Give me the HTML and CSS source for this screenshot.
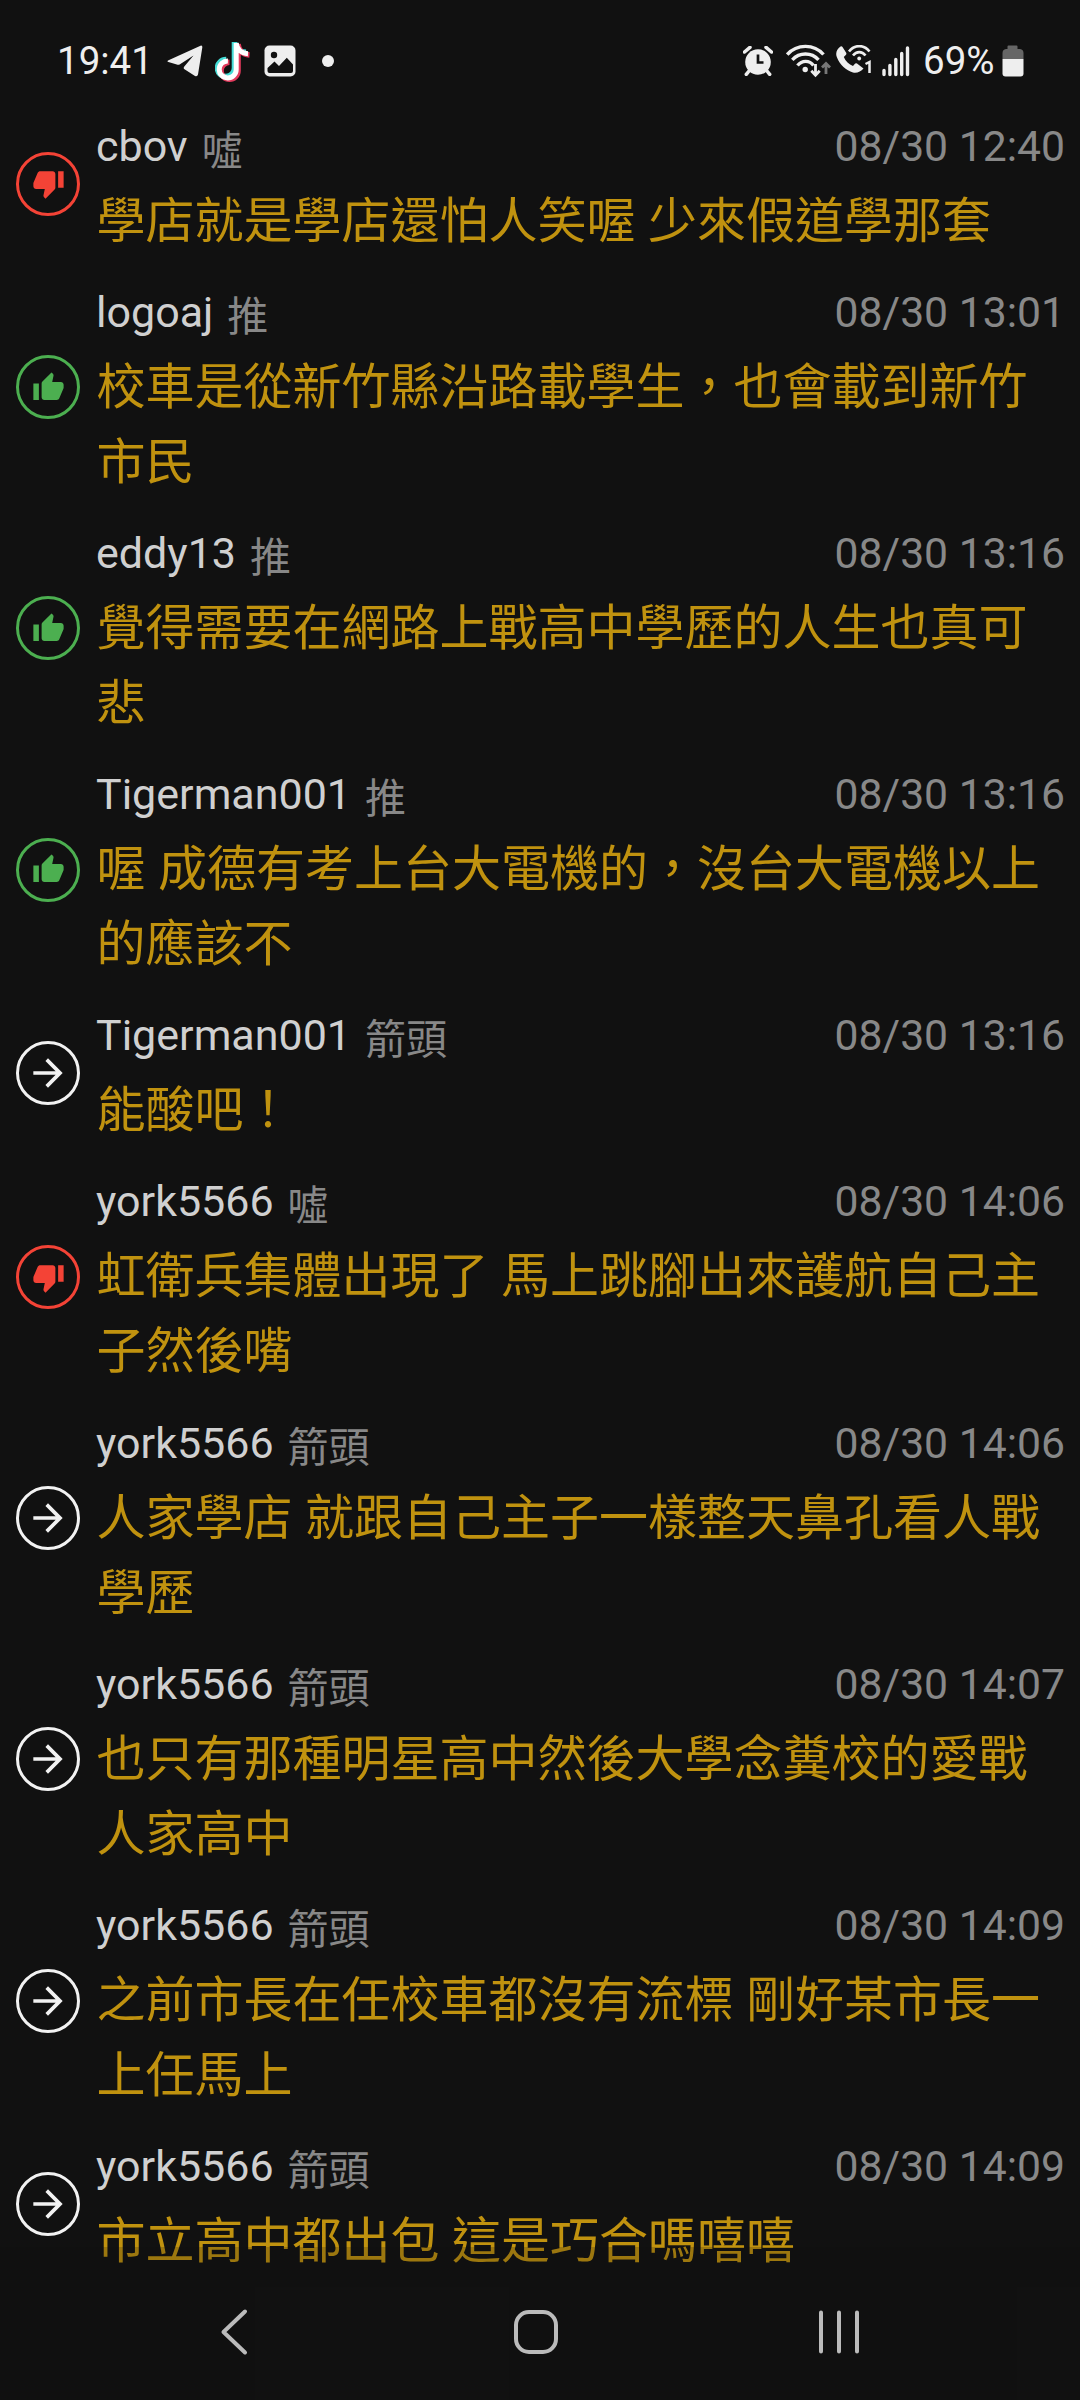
FILE: index.html
```html
<!DOCTYPE html>
<html lang="zh-Hant">
<head>
<meta charset="utf-8">
<title>推文</title>
<link rel="stylesheet" href="styles.css">
</head>
<body>
<svg width="0" height="0" class="defs">
  <symbol id="up" viewBox="0 0 24 24"><path d="M1 21h4V9H1v12zm22-11c0-1.100-.9-2-2-2h-6.310l.95-4.570.030-.320c0-.410-.170-.790-.440-1.060L14.170 1 7.590 7.590C7.220 7.950 7 8.450 7 9v10c0 1.100.9 2 2 2h9c.83 0 1.540-.5 1.840-1.220l3.020-7.050c.090-.230.140-.470.140-.730v-2z"/></symbol>
  <symbol id="down" viewBox="0 0 24 24"><path d="M15 3H6c-.83 0-1.540.5-1.840 1.220l-3.020 7.050c-.09.230-.14.470-.14.730v2c0 1.100.9 2 2 2h6.310l-.95 4.570-.030.320c0 .410.170.790.440 1.060L9.830 23l6.590-6.590c.360-.360.580-.860.580-1.410V5c0-1.100-.9-2-2-2zm4 0v12h4V3h-4z"/></symbol>
  <symbol id="arrow" viewBox="0 0 24 24"><path d="M12 4l-1.410 1.410L16.170 11H4v2h12.170l-5.580 5.590L12 20l8-8z"/></symbol>
</svg>
<div class="screen">
  <header class="status">
    <div class="status-left">
      <span class="clock">19:41</span>
      <svg class="telegram" width="36" height="32" viewBox="0 0 36 32"><path d="M1.500 15.200L33.500.7Q35.500 0 35.300 2.500L31 29.500Q30.400 32 28 31L17.500 24.300Q16 23.200 17.300 21.600L26.500 10.500L13 19.300Q11.500 20.200 9.800 19.600L1.400 17Q-.5 16.200 1.500 15.200Z"/></svg>
      <svg class="tiktok" width="36" height="41" viewBox="0 0 36 41">
        <g fill="none" stroke-width="5.600">
          <path stroke="#45dcd6" d="M19.500 1V27A8.500 8.500 0 1 1 11.200 18.600M19.500 1.500C20.200 7 24.200 11 31 11.300"/>
          <path stroke="#e23a5c" d="M23 3V29.700A8.500 8.500 0 1 1 14.500 21.200M23 3C23.500 9 27.500 13.500 34.500 14"/>
          <path stroke="#fff" stroke-width="5" d="M21.200 2V28.400A8.500 8.500 0 1 1 12.900 19.900M21.200 2C21.900 8 25.900 12.300 33 12.700"/>
        </g>
      </svg>
      <svg class="picture" width="32" height="32" viewBox="0 0 32 32"><rect x=".5" y=".5" width="31" height="31" rx="5"/><g fill="#111"><circle cx="10" cy="10" r="3.200"/><path d="M3.500 23L10.500 16.500L15 21L22.800 12.800L29 19.500V26Q29 28 27 28H5.500Q3.500 28 3.500 26Z"/></g></svg>
      <i class="more"></i>
    </div>
    <div class="status-right">
      <svg class="alarm" width="30" height="30" viewBox="0 0 30 30"><circle cx="15" cy="16" r="12.800"/><path d="M1.500 6L7 1.300M28.500 6L23 1.300M6 25L3.300 28.300M24 25L26.700 28.300" stroke="#eee" stroke-width="3.500" stroke-linecap="round"/><path d="M15 8.500V16.500H20.500" fill="none" stroke="#111" stroke-width="2.700"/></svg>
      <svg class="wifi" width="46" height="34" viewBox="0 0 46 34"><g fill="none" stroke="#eee" stroke-width="3.400"><path d="M1.200 10.500C11-.3 28-.3 37.500 10.500M6.300 15.800C13.500 8 25.500 8 32.500 15.800M11.500 21.500C16 16 23.500 16 27.500 21.500"/><path stroke-width="2.800" d="M29.500 20V31M25.300 26.800L29.500 31.200L33.700 26.800"/><path stroke="#777" stroke-width="2.800" d="M40 30V20M36 23.500L40 19.500L44 23.500"/></g><circle cx="19.200" cy="25.500" r="2.700"/></svg>
      <svg class="call" width="36" height="32" viewBox="0 0 36 32"><path d="M4.500 1.500C1 4-1 8 1 12.500C4 20 10 25.500 17 27.500C21 28.400 25 26.500 27.500 23.500L21 18.500Q19.500 18 18.500 19.200L17 21C13 19.500 9.500 16 7.800 12L10 9.800Q10.800 8.700 10 7.500L6.500 2Q5.700.8 4.500 1.500Z"/><g fill="none" stroke="#eee" stroke-width="2.600"><path d="M13 6.500C18.500-.7 28-.7 33.500 6.500M17 10.500C20.500 6 26 6 29.500 10.500"/></g><circle cx="23.200" cy="13.500" r="1.900"/><path d="M30 19.500L34 17.600V28" fill="none" stroke="#111" stroke-width="7"/><path d="M29.500 19L33.500 17V28" fill="none" stroke="#eee" stroke-width="2.500"/></svg>
      <svg class="signal" width="28" height="31" viewBox="0 0 28 31"><path d="M2 24.500V28.500M7.900 19.500V28.500M13.800 13.500V28.500M19.700 7.500V28.500M25.500 2V28.500" stroke="#eee" stroke-width="3.400" stroke-linecap="round"/></svg>
      <span class="percent">69%</span>
      <svg class="battery" width="22" height="32" viewBox="0 0 22 32"><path fill="#666" d="M5.500 4V1.500Q5.500.5 6.500.5H14.500Q15.500.5 15.500 1.500V4H18Q21.500 4.500 21.500 8V14H.5V8Q.5 4.500 4 4Z"/><path d="M.5 14H21.500V28.500Q21.500 31.500 18.500 31.500H3.500Q.5 31.500.5 28.500Z"/></svg>
    </div>
  </header>
  <main class="list">
    <article class="row"><span class="badge boo"><svg><use href="#down"/></svg></span><div class="body"><div class="head"><span class="name">cbov</span><span class="kind">噓</span><time>08/30 12:40</time></div><p>學店就是學店還怕人笑喔 少來假道學那套</p></div></article>
    <article class="row"><span class="badge push"><svg><use href="#up"/></svg></span><div class="body"><div class="head"><span class="name">logoaj</span><span class="kind">推</span><time>08/30 13:01</time></div><p>校車是從新竹縣沿路載學生，也會載到新竹<br>市民</p></div></article>
    <article class="row"><span class="badge push"><svg><use href="#up"/></svg></span><div class="body"><div class="head"><span class="name">eddy13</span><span class="kind">推</span><time>08/30 13:16</time></div><p>覺得需要在網路上戰高中學歷的人生也真可<br>悲</p></div></article>
    <article class="row"><span class="badge push"><svg><use href="#up"/></svg></span><div class="body"><div class="head"><span class="name">Tigerman001</span><span class="kind">推</span><time>08/30 13:16</time></div><p>喔 成德有考上台大電機的，沒台大電機以上<br>的應該不</p></div></article>
    <article class="row"><span class="badge"><svg><use href="#arrow"/></svg></span><div class="body"><div class="head"><span class="name">Tigerman001</span><span class="kind">箭頭</span><time>08/30 13:16</time></div><p>能酸吧！</p></div></article>
    <article class="row"><span class="badge boo"><svg><use href="#down"/></svg></span><div class="body"><div class="head"><span class="name">york5566</span><span class="kind">噓</span><time>08/30 14:06</time></div><p>虹衛兵集體出現了 馬上跳腳出來護航自己主<br>子然後嘴</p></div></article>
    <article class="row"><span class="badge"><svg><use href="#arrow"/></svg></span><div class="body"><div class="head"><span class="name">york5566</span><span class="kind">箭頭</span><time>08/30 14:06</time></div><p>人家學店 就跟自己主子一樣整天鼻孔看人戰<br>學歷</p></div></article>
    <article class="row"><span class="badge"><svg><use href="#arrow"/></svg></span><div class="body"><div class="head"><span class="name">york5566</span><span class="kind">箭頭</span><time>08/30 14:07</time></div><p>也只有那種明星高中然後大學念糞校的愛戰<br>人家高中</p></div></article>
    <article class="row"><span class="badge"><svg><use href="#arrow"/></svg></span><div class="body"><div class="head"><span class="name">york5566</span><span class="kind">箭頭</span><time>08/30 14:09</time></div><p>之前市長在任校車都沒有流標 剛好某市長一<br>上任馬上</p></div></article>
    <article class="row"><span class="badge"><svg><use href="#arrow"/></svg></span><div class="body"><div class="head"><span class="name">york5566</span><span class="kind">箭頭</span><time>08/30 14:09</time></div><p>市立高中都出包 這是巧合嗎嘻嘻</p></div></article>
  </main>
  <div class="scrim"></div>
  <nav class="nav">
    <svg viewBox="0 0 60 60"><path d="M40 9.500L18.500 30L40 50.500"/></svg>
    <svg viewBox="0 0 60 60"><rect x="10" y="10" width="40" height="40" rx="13"/></svg>
    <svg viewBox="0 0 60 60"><path d="M14 10.500V49.500M32 10.500V49.500M50 10.500V49.500"/></svg>
  </nav>
</div>
</body>
</html>
```
FILE: styles.css
```css
* { box-sizing: border-box; }
body {
  margin: 0;
  background: #111;
  color: #d0d0d0;
  font-family: Roboto, "Noto Sans CJK TC", sans-serif;
}
.defs { display: block; position: absolute; }
.screen {
  position: relative;
  display: flex;
  flex-direction: column;
  width: 1080px;
  height: 2400px;
  overflow: hidden;
}
.status {
  display: flex;
  justify-content: space-between;
  height: 100.500px;
  padding: 36px 56px 0 57px;
  color: #eee;
  fill: #eee;
}
.status-left, .status-right { display: flex; align-items: center; height: 50px; }
.status svg { display: block; flex: none; }
.clock, .percent { font-size: 38.500px; line-height: 50px; white-space: nowrap; }
.clock { width: 110px; }
.tiktok { margin-left: 12px; }
.picture { margin-left: 13px; }
.more { width: 12px; height: 12px; margin-left: 26px; border-radius: 50%; background: #eee; }
.wifi { margin-left: 13px; }
.call { margin-left: 4px; }
.signal { margin-left: 10px; }
.percent { margin-left: 13px; width: 74px; }
.battery { margin-left: 5px; }

.row {
  display: flex;
  align-items: center;
  padding: 0 15px 13.200px 16px;
}
.badge {
  display: flex;
  align-items: center;
  justify-content: center;
  flex: none;
  width: 64px;
  height: 64px;
  margin: 13.200px 16px 0 0;
  border: 3px solid currentColor;
  border-radius: 50%;
  color: #f2f2f2;
}
.badge svg { width: 44px; height: 44px; fill: currentColor; }
.boo { color: #f44336; }
.push { color: #4caf50; }
.boo svg, .push svg { width: 33px; height: 33px; }
.body { flex: 1; min-width: 0; }
.head { display: flex; align-items: baseline; height: 78px; padding-top: 11px; line-height: 62px; }
.name { font-size: 43px; }
.kind {
  margin-left: 14px;
  position: relative;
  top: 4px;
  font-size: 41px;
  font-family: "Noto Sans CJK TC", sans-serif;
  color: #888;
}
time { margin-left: auto; font-size: 42.700px; color: #888; }
p {
  margin: 0;
  padding-left: .6px;
  font-size: 49px;
  line-height: 75px;
  font-family: "Noto Sans CJK TC", sans-serif;
  word-spacing: 1.500px;
  color: #c0920f;
  white-space: nowrap;
}
.scrim { position: absolute; left: 0; right: 0; top: 2247px; bottom: 0; background: rgba(17, 17, 17, .2); }
.nav {
  position: absolute;
  left: 205px;
  top: 2302px;
  display: flex;
  gap: 241px;
}
.nav svg {
  width: 60px;
  height: 60px;
  fill: none;
  stroke: #bbb;
  stroke-width: 4;
  stroke-linecap: round;
  stroke-linejoin: round;
}
```
